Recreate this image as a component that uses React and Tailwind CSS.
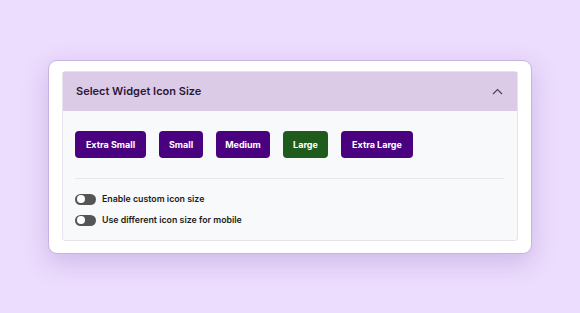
import React from "react";

const sizes = [
  { label: "Extra Small", w: "w-[71px]" },
  { label: "Small", w: "w-[44px]" },
  { label: "Medium", w: "w-[54px]" },
  { label: "Large", w: "w-[45px]" },
  { label: "Extra Large", w: "w-[72px]" },
];

const Toggle = ({ label }) => (
  <div className="flex items-center gap-[6px] h-[12px]">
    <div className="w-[21px] h-[11px] rounded-full bg-[#555] flex items-center px-[1.5px]">
      <div className="w-[8px] h-[8px] rounded-full bg-white" />
    </div>
    <span className="text-[8.8px] font-semibold text-[#1c1c1c]">{label}</span>
  </div>
);

export default function App() {
  return (
    <div
      className="w-[580px] h-[313px] bg-[#ecdcfd] pt-[60px] pl-[48px]"
      style={{ fontFamily: "Inter, 'Noto Sans', sans-serif" }}
    >
      <div className="w-[484px] h-[194px] bg-white rounded-[9px] border border-[#c8b3e3] shadow-[0_8px_24px_rgba(120,80,170,0.25)] pt-[10px] px-[13px]">
        <div className="h-[170px] border border-[#e4e4ea] rounded-[3px] bg-[#f8f9fb] flex flex-col">
          <div className="h-[39px] bg-[#dccbe6] flex items-center justify-between pl-[13px] pr-[14px]">
            <span className="text-[11px] font-semibold text-[#2a1838]">
              Select Widget Icon Size
            </span>
            <svg width="11" height="7" viewBox="0 0 11 7" fill="none">
              <path d="M1 6 L5.5 1.5 L10 6" stroke="#4a4458" strokeWidth="1.2" />
            </svg>
          </div>
          <div className="px-[12px] pt-[20px]">
            <div className="flex gap-[13px]">
              {sizes.map((s) => (
                <button
                  key={s.label}
                  className={`h-[27px] ${s.w} rounded-[4px] text-white text-[9px] font-bold whitespace-nowrap ${
                    s.label === "Large" ? "bg-[#1f5b1d]" : "bg-[#4a0180]"
                  }`}
                >
                  {s.label}
                </button>
              ))}
            </div>
            <div className="h-px bg-[#e6e6ec] mt-[20px] mr-[1px]" />
            <div className="flex flex-col gap-[9px] pt-[14px]">
              <Toggle label="Enable custom icon size" />
              <Toggle label="Use different icon size for mobile" />
            </div>
          </div>
        </div>
      </div>
    </div>
  );
}
